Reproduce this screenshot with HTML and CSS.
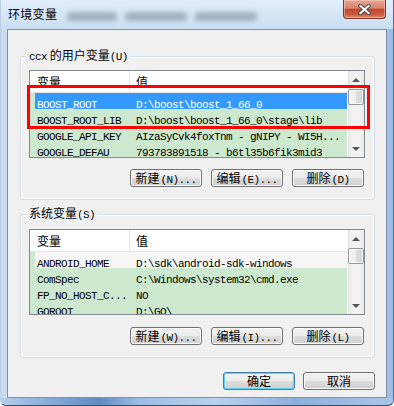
FILE: index.html
```html
<!DOCTYPE html>
<html lang="zh-CN">
<head>
  <meta charset="UTF-8">
  <meta name="viewport" content="width=device-width, initial-scale=1.0">
  <title>环境变量</title>
  <link rel="stylesheet" href="styles.css">
</head>
<body>

  <div class="window">
    <div class="titlebar">
      <span class="title">环境变量</span>
      <span class="glass-blur short"></span>
      <span class="glass-blur"></span>
      <span class="glass-blur"></span>
      <button class="close" aria-label="关闭">
        <svg width="13" height="11" viewBox="0 0 13 11">
          <path d="M2.2 1.8 L10.8 9.2 M10.8 1.8 L2.2 9.2" stroke="#4a4a4a" stroke-width="4" stroke-linecap="round"/>
          <path d="M2.2 1.8 L10.8 9.2 M10.8 1.8 L2.2 9.2" stroke="#fff" stroke-width="2" stroke-linecap="round"/>
        </svg>
      </button>
    </div>

    <div class="client">
      <fieldset class="group">
        <legend><span class="mono">ccx</span> 的用户变量<span class="mono">(U)</span></legend>
        <div class="list user-list">
          <div class="list-main">
            <div class="list-head">
              <span class="col-name">变量</span>
              <span class="col-value">值</span>
            </div>
            <div class="list-rows">
              <div class="row selected"><span class="col-name">BOOST_ROOT</span><span class="col-value">D:\boost\boost_1_66_0</span></div>
              <div class="row"><span class="col-name">BOOST_ROOT_LIB</span><span class="col-value">D:\boost\boost_1_66_0\stage\lib</span></div>
              <div class="row"><span class="col-name">GOOGLE_API_KEY</span><span class="col-value">AIzaSyCvk4foxTnm - gNIPY - WI5H...</span></div>
              <div class="row"><span class="col-name">GOOGLE_DEFAU</span><span class="col-value">793783891518 - b6tl35b6fik3mid3</span></div>
            </div>
          </div>
          <div class="scrollbar">
            <span class="sb-btn up"></span>
            <span class="sb-thumb"></span>
            <span class="sb-btn down"></span>
          </div>
        </div>
        <div class="group-buttons">
          <button class="btn">新建<span class="mono">(N)...</span></button>
          <button class="btn">编辑<span class="mono">(E)...</span></button>
          <button class="btn">删除<span class="mono">(D)</span></button>
        </div>
      </fieldset>

      <fieldset class="group system">
        <legend>系统变量<span class="mono">(S)</span></legend>
        <div class="list system-list">
          <div class="list-main">
            <div class="list-head">
              <span class="col-name">变量</span>
              <span class="col-value">值</span>
            </div>
            <div class="list-rows">
              <div class="row hot"><span class="col-name">ANDROID_HOME</span><span class="col-value">D:\sdk\android-sdk-windows</span></div>
              <div class="row"><span class="col-name">ComSpec</span><span class="col-value">C:\Windows\system32\cmd.exe</span></div>
              <div class="row"><span class="col-name">FP_NO_HOST_C...</span><span class="col-value">NO</span></div>
              <div class="row"><span class="col-name">GOROOT</span><span class="col-value">D:\GO\</span></div>
            </div>
          </div>
          <div class="scrollbar">
            <span class="sb-btn up"></span>
            <span class="sb-thumb"></span>
            <span class="sb-btn down"></span>
          </div>
        </div>
        <div class="group-buttons">
          <button class="btn">新建<span class="mono">(W)...</span></button>
          <button class="btn">编辑<span class="mono">(I)...</span></button>
          <button class="btn">删除<span class="mono">(L)</span></button>
        </div>
      </fieldset>

      <div class="dialog-buttons">
        <button class="btn default">确定</button>
        <button class="btn">取消</button>
      </div>
    </div>

    <div class="bottom-frame"></div>

    <!-- annotation drawn over the user list -->
    <div class="mark-box"></div>
  </div>

</body>
</html>
```

FILE: styles.css
```css
body {
  margin: 0;
  background: #fff;
  font-family: "Noto Sans CJK SC", sans-serif;
  font-size: 12px;
  color: #000;
}

.mono {
  font-family: "Liberation Mono", monospace;
  font-size: 11px;
  letter-spacing: -0.6px;
}

.window {
  position: relative;
  width: 394px;
  height: 406px;
  box-sizing: border-box;
  display: flex;
  flex-direction: column;
  background: linear-gradient(90deg, #c9dcf1 0, #c4daf0 60%, #b4cfec 90%, #9cbde2 100%);
  border-left: 1px solid #b9cde3;
  border-right: 1px solid #4d6f96;
  border-bottom: 1px solid #33506f;
  border-radius: 0 0 6px 6px;
}

.titlebar {
  height: 29px;
  flex: none;
  display: flex;
  align-items: flex-start;
  background: linear-gradient(180deg, #e3eefa 0, #d3e4f6 60%, #c9ddf2 100%);
}

.title {
  margin: 7px 0 0 7px;
  line-height: 14px;
  font-size: 12px;
  letter-spacing: 0.3px;
}

.glass-blur {
  width: 62px;
  height: 9px;
  margin: 12px 0 0 8px;
  background: #7f8b98;
  border-radius: 4px;
  filter: blur(2.5px);
  opacity: 0.6;
}

.glass-blur.short {
  width: 50px;
  margin-left: 10px;
}

.close {
  margin: 0 7px 0 auto;
  width: 43px;
  height: 19px;
  padding: 0;
  border: 1px solid #7c3328;
  border-top: none;
  border-radius: 0 0 4px 4px;
  background: linear-gradient(180deg, #e8a594 0, #d9836e 45%, #c4462f 52%, #cb5a3f 80%, #dc8a6c 100%);
  box-shadow: inset 0 0 0 1px rgba(255, 220, 210, 0.45);
  display: flex;
  align-items: center;
  justify-content: center;
}

.client {
  height: 369px;
  flex: none;
  box-sizing: border-box;
  margin: 0 6px 0 6px;
  padding: 18px 11px 0 12px;
  border: 1px solid #7f91a6;
  background: #f0f0f0;
}

.bottom-frame {
  flex: 1;
  border-radius: 0 0 6px 6px;
  background: linear-gradient(90deg, #b3cdea 0, #8fb2db 10%, #5f8cc2 25%, #9bbde3 35%, #b8d1ec 55%, #8db0da 75%, #a9c6e7 100%);
}

.group {
  margin: 0;
  padding: 6px 9px 12px 8px;
  min-width: 0;
  border: 1px solid #d5dfe5;
  border-radius: 3px;
  box-shadow: inset 0 0 0 1px #fff;
}

.group.system {
  margin-top: 6px;
  padding-top: 7px;
}

.group legend {
  margin-left: -2px;
  padding: 0 2px;
  line-height: 14px;
  background: #f0f0f0;
}

.list {
  display: flex;
  height: 88px;
  box-sizing: border-box;
  border: 1px solid #828790;
  background: #fff;
}

.system-list {
  height: 86px;
}

.list-main {
  flex: 1;
  overflow: hidden;
  display: flex;
  flex-direction: column;
}

.list-head {
  display: flex;
  height: 22px;
  flex: none;
  box-sizing: border-box;
  line-height: 21px;
  border-bottom: 1px solid #e5e5e5;
  background: #fff;
}

.list-head .col-name {
  width: 100px;
  box-sizing: border-box;
  padding-left: 7px;
  border-right: 1px solid #e5e5e5;
}

.list-head .col-value {
  padding-left: 6px;
}

.list-rows {
  flex: 1;
  background: #cce8cf;
  font-family: "Liberation Mono", monospace;
  font-size: 11px;
  letter-spacing: -0.6px;
}

.row {
  display: flex;
  height: 16px;
  box-sizing: border-box;
  padding-top: 4px;
  margin-left: 5px;
  line-height: 16px;
  white-space: nowrap;
}

.row .col-name {
  width: 95px;
  flex: none;
  box-sizing: border-box;
  padding-left: 2px;
}

.row .col-value {
  padding-left: 6px;
}

.row.selected {
  background: #3399ff;
  color: #fff;
}

.row.hot {
  background: #f6f6f6;
}

.scrollbar {
  width: 17px;
  flex: none;
  display: flex;
  flex-direction: column;
  background: linear-gradient(90deg, #e6e6e6 0, #f2f2f2 25%, #f2f2f2 75%, #e9e9e9 100%);
  border-left: 1px solid #f7f7f7;
  box-sizing: border-box;
}

.sb-btn {
  height: 17px;
  flex: none;
  display: flex;
  align-items: center;
  justify-content: center;
}

.sb-btn::before {
  content: "";
  border-left: 4px solid transparent;
  border-right: 4px solid transparent;
}

.sb-btn.up::before {
  border-bottom: 4px solid #555;
}

.sb-btn.down {
  margin-top: auto;
}

.sb-btn.down::before {
  border-top: 4px solid #555;
}

.sb-thumb {
  height: 16px;
  flex: none;
  margin: 1px 0 0 0;
  box-sizing: border-box;
  border: 1px solid #979797;
  border-radius: 2px;
  background: linear-gradient(90deg, #f6f6f6 0, #ececec 50%, #dedede 50%, #d4d4d4 100%);
  box-shadow: inset 0 0 0 1px rgba(255, 255, 255, 0.7);
}

.group-buttons {
  display: flex;
  justify-content: flex-end;
  gap: 9px;
  margin-top: 11px;
  padding-right: 1px;
}

.system .group-buttons {
  margin-top: 12px;
}

.btn {
  width: 72px;
  height: 18px;
  padding: 0;
  font-family: "Noto Sans CJK SC", sans-serif;
  font-size: 12px;
  line-height: 16px;
  color: #000;
  border: 1px solid #707070;
  border-radius: 3px;
  background: linear-gradient(180deg, #f2f2f2 0, #ebebeb 50%, #dddddd 50%, #cfcfcf 100%);
  box-shadow: inset 0 0 0 1px #fbfbfb;
}

.btn .mono {
  margin-left: 1px;
}

.btn.default {
  border-color: #3c7fb1;
  box-shadow: inset 0 0 0 1px #5fd0f7;
}

.dialog-buttons {
  display: flex;
  justify-content: flex-end;
  gap: 8px;
  margin-top: 14px;
}

.mark-box {
  position: absolute;
  left: 26px;
  top: 85px;
  width: 343px;
  height: 44px;
  box-sizing: border-box;
  border: 3px solid #f00;
}
```
